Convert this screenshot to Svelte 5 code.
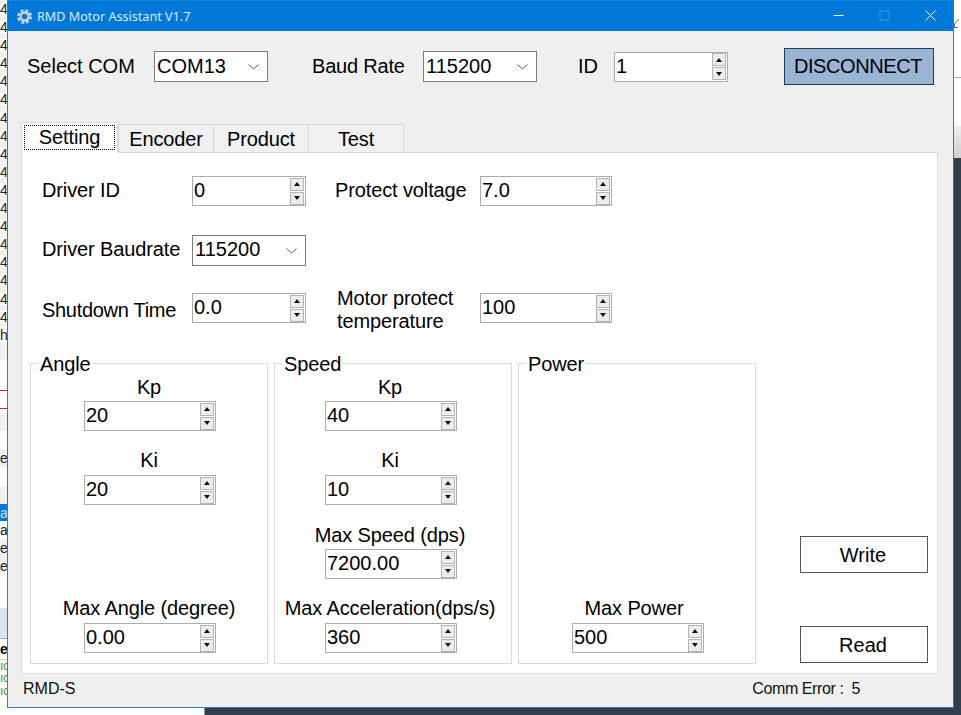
<script>
	const tabs = ['Setting', 'Encoder', 'Product', 'Test'];
	const stripRows = [
		...Array(18).fill({ h: 18.1, text: '4', kind: 'log' }),
		{ h: 17, text: 'h', kind: 'plain' },
		{ h: 17, text: '', kind: 'grey' },
		{ h: 18, text: '', kind: 'plain' },
		{ h: 18, text: '_', kind: 'rule' },
		{ h: 18, text: '_', kind: 'rule' },
		{ h: 17, text: '', kind: 'grey' },
		{ h: 18, text: '', kind: 'plain' },
		{ h: 18, text: 'e', kind: 'grey' },
		{ h: 19, text: '', kind: 'plain' },
		{ h: 18, text: '', kind: 'grey' },
		{ h: 17, text: 'a', kind: 'active' },
		{ h: 18, text: 'a', kind: 'plain' },
		{ h: 18, text: 'e', kind: 'grey' },
		{ h: 18, text: 'e', kind: 'grey' },
		{ h: 16, text: '', kind: 'plain' },
		{ h: 30, text: '', kind: 'toolbar' }
	];
</script>

{#snippet spin(value, cls = 'wide')}
	<div class="spin {cls}">
		<span class="value">{value}</span>
		<div class="arrows">
			<span class="arrow"><i class="up"></i></span>
			<span class="arrow"><i class="down"></i></span>
		</div>
	</div>
{/snippet}

{#snippet combo(value)}
	<div class="combo">
		<span class="value">{value}</span>
		<svg width="11" height="6" viewBox="0 0 11 6"><path d="M0.5 0.5 L5.5 5 L10.5 0.5" fill="none" stroke="#606060" /></svg>
	</div>
{/snippet}

{#snippet field(label, value, cls = '')}
	<div class="field {cls}">
		<span class="field-label">{label}</span>
		{@render spin(value, 'narrow')}
	</div>
{/snippet}

<div class="desktop">
	<div class="strip">
		{#each stripRows as row}
			<div class="strip-row {row.kind}" style="height: {row.h}px">{row.text}</div>
		{/each}
		<div class="strip-head">e</div>
		<div class="strip-green">ıc</div>
		<div class="strip-green">ıc</div>
		<div class="strip-green">ıc</div>
	</div>

	<div class="side">
		<svg class="side-icon" width="7" height="12" viewBox="0 0 7 12"><path d="M0 11.5 H4 M0.5 11 V8 L5 3" fill="none" stroke="#666" /></svg>
		<div class="side-line"></div>
		<div class="side-fade"></div>
	</div>

	<div class="window">
		<header class="titlebar">
			<svg class="gear" width="15" height="15" viewBox="0 0 15 15">
				<circle cx="7.5" cy="7.5" r="6.2" fill="none" stroke="#c9d6e2" stroke-width="2.4" stroke-dasharray="3 1.87" />
				<circle cx="7.5" cy="7.5" r="4" fill="none" stroke="#c9d6e2" stroke-width="2.4" />
			</svg>
			<span class="title">RMD Motor Assistant V1.7</span>
			<div class="controls">
				<svg width="11" height="11" viewBox="0 0 11 11"><path d="M0.5 5.5 H10.5" stroke="#fff" /></svg>
				<svg width="11" height="11" viewBox="0 0 11 11"><rect x="1" y="1" width="9" height="9" fill="none" stroke="#3d97e3" /></svg>
				<svg width="11" height="11" viewBox="0 0 11 11"><path d="M0.5 0.5 L10.5 10.5 M10.5 0.5 L0.5 10.5" stroke="#fff" /></svg>
			</div>
		</header>

		<div class="toolbar">
			<span class="tool-label com">Select COM</span>
			{@render combo('COM13')}
			<span class="tool-label baud">Baud Rate</span>
			{@render combo('115200')}
			<span class="tool-label id">ID</span>
			{@render spin('1')}
			<button class="disconnect">DISCONNECT</button>
		</div>

		<div class="tabs">
			{#each tabs as tab, i}
				<div class="tab" class:active={i === 0}>
					<span class="tab-text">{tab}</span>
				</div>
			{/each}
		</div>

		<div class="panel">
			<div class="row first">
				<span class="row-label">Driver ID</span>
				{@render spin('0')}
				<span class="row-label second">Protect voltage</span>
				{@render spin('7.0', 'narrow')}
			</div>
			<div class="row baudrate">
				<span class="row-label">Driver Baudrate</span>
				{@render combo('115200')}
			</div>
			<div class="row shutdown">
				<span class="row-label">Shutdown Time</span>
				{@render spin('0.0')}
				<span class="row-label second temp">Motor protect<br />temperature</span>
				{@render spin('100', 'narrow')}
			</div>

			<div class="lower">
				<section class="group angle">
					<span class="legend">Angle</span>
					{@render field('Kp', '20')}
					{@render field('Ki', '20', 'tall')}
					{@render field('Max Angle (degree)', '0.00', 'bottom')}
				</section>
				<section class="group speed">
					<span class="legend">Speed</span>
					{@render field('Kp', '40')}
					{@render field('Ki', '10', 'tall')}
					{@render field('Max Speed (dps)', '7200.00')}
					{@render field('Max Acceleration(dps/s)', '360', 'bottom')}
				</section>
				<section class="group power">
					<span class="legend">Power</span>
					{@render field('Max Power', '500', 'bottom')}
				</section>
				<div class="actions">
					<button class="action">Write</button>
					<button class="action">Read</button>
				</div>
			</div>
		</div>

		<footer class="status">
			<span>RMD-S</span>
			<span class="comm">Comm Error :<span class="count">5</span></span>
		</footer>
	</div>
</div>

<style>
	:global(body) {
		margin: 0;
	}

	.desktop {
		position: relative;
		width: 961px;
		height: 715px;
		overflow: hidden;
		background: #333f4a;
		font-family: 'Liberation Sans', Arial, sans-serif;
		color: #000;
	}

	/* the windows behind ours */
	.strip {
		position: absolute;
		top: 0;
		left: 0;
		width: 205px;
		height: 715px;
		overflow: hidden;
		background: #fff;
		font-size: 14px;
		border-right: 1px solid #8a8f94;
		box-sizing: border-box;
	}

	.strip-row {
		line-height: 18px;
		white-space: nowrap;
		color: #222;
	}

	.strip-row.log {
		background: linear-gradient(#f0f0f0 0 3px, #fff 3px 15px, #f0f0f0 15px);
	}

	.strip-row.grey {
		background: #f0f0f0;
	}

	.strip-row.rule {
		color: #a33;
		line-height: 10px;
	}

	.strip-row.active {
		background: #0078d7;
		color: #cfe6fa;
	}

	.strip-row.toolbar {
		background: #dfe3e8;
		border-bottom: 1px solid #aaa;
	}

	.strip-head {
		font-weight: 700;
		line-height: 20px;
		border-bottom: 1px solid #ccc;
	}

	.strip-green {
		color: #3c9a1e;
		line-height: 12.5px;
		font-size: 12px;
	}

	.side {
		position: absolute;
		top: 0;
		right: 0;
		width: 7px;
		height: 158px;
		background: #fff;
	}

	.side-icon {
		position: absolute;
		top: 16px;
		left: 0;
	}

	.side-line {
		position: absolute;
		top: 77px;
		left: 0;
		width: 7px;
		height: 1px;
		background: #aaa;
	}

	.side-fade {
		position: absolute;
		top: 126px;
		left: 0;
		width: 7px;
		height: 32px;
		background: linear-gradient(#eee, #d0d0d0);
	}

	.window {
		position: absolute;
		top: 0;
		left: 7px;
		width: 947px;
		height: 708px;
		box-sizing: border-box;
		display: flex;
		flex-direction: column;
		border: 1px solid #2b7cc4;
		border-top: 1px solid #1a86de;
		background: #efefef;
		font-size: 20px;
		letter-spacing: -0.12px;
	}

	.titlebar {
		display: flex;
		align-items: center;
		flex: none;
		height: 30px;
		background: #0078d7;
		color: #dcebf8;
		letter-spacing: 0;
	}

	.gear {
		margin-left: 9px;
	}

	.title {
		margin-left: 5px;
		font-family: 'Noto Sans', sans-serif;
		font-size: 12.6px;
	}

	.controls {
		display: flex;
		align-items: center;
		gap: 35px;
		margin-left: auto;
		margin-right: 17px;
		padding-bottom: 2px;
	}

	.toolbar {
		display: flex;
		align-items: center;
		flex: none;
		height: 37px;
		margin-top: 17px;
		padding-left: 19px;
	}

	.tool-label.com {
		width: 127px;
		letter-spacing: 0;
	}

	.tool-label.baud {
		width: 111px;
		margin-left: 44px;
		letter-spacing: -0.2px;
	}

	.tool-label.id {
		width: 36px;
		margin-left: 41px;
	}

	.disconnect {
		width: 150px;
		height: 37px;
		margin-left: 56px;
		border: 1px solid #1f3a5c;
		border-radius: 0;
		background: #9ab5d3;
		padding: 0 2px 0 0;
		font: inherit;
		letter-spacing: -0.4px;
		color: #000;
	}

	.combo,
	.spin {
		display: flex;
		align-items: center;
		box-sizing: border-box;
		flex: none;
		background: #fff;
		line-height: 1;
		letter-spacing: 0;
	}

	.combo {
		justify-content: space-between;
		width: 114px;
		height: 31px;
		padding: 0 8px 2px 2px;
		border: 1px solid #7a7a7a;
	}

	.combo svg {
		margin-top: 3px;
	}

	.spin {
		justify-content: space-between;
		height: 30px;
		padding-left: 1px;
		border: 1px solid #ababab;
	}

	.spin .value {
		margin-bottom: 2px;
	}

	.spin.wide {
		width: 114px;
	}

	.spin.narrow {
		width: 132px;
	}

	.arrows {
		display: flex;
		flex-direction: column;
		gap: 1px;
		margin-right: 1px;
	}

	.arrow {
		display: flex;
		align-items: center;
		justify-content: center;
		box-sizing: border-box;
		width: 14px;
		height: 13px;
		border: 1px solid #b4b4b4;
		background: #ececec;
	}

	.arrow i {
		width: 0;
		height: 0;
		border-left: 3.5px solid transparent;
		border-right: 3.5px solid transparent;
	}

	.arrow i.up {
		border-bottom: 4px solid #111;
	}

	.arrow i.down {
		border-top: 4px solid #111;
	}

	.tabs {
		display: flex;
		align-items: flex-end;
		flex: none;
		height: 31px;
		margin-top: 37px;
		margin-bottom: -1px;
		padding-left: 14px;
		position: relative;
		z-index: 1;
	}

	.tab {
		display: flex;
		align-items: center;
		justify-content: center;
		box-sizing: border-box;
		width: 96px;
		height: 29px;
		margin-right: -1px;
		padding-top: 2px;
		border: 1px solid #d9d9d9;
		background: #f0f0f0;
	}

	.tab:last-child {
		margin-right: 0;
	}

	.tab.active {
		width: 97px;
		height: 31px;
		margin-right: 0;
		margin-left: -1px;
		padding: 2px;
		background: #fff;
		border-bottom-color: #fff;
	}

	.tab.active .tab-text {
		display: flex;
		align-items: center;
		justify-content: center;
		box-sizing: border-box;
		width: 100%;
		height: 100%;
		border: 1px dotted #000;
	}

	.panel {
		box-sizing: border-box;
		flex: none;
		width: 917px;
		height: 522px;
		margin-left: 13px;
		padding: 23px 0 9px 8px;
		border: 1px solid #d9d9d9;
		background: #fff;
		display: flex;
		flex-direction: column;
	}

	.row {
		display: flex;
		align-items: center;
		margin-left: 12px;
		flex: none;
		height: 30px;
	}

	.row.baudrate {
		margin-top: 29px;
	}

	.row.shutdown {
		margin-top: 28px;
	}

	.row-label {
		box-sizing: border-box;
		width: 150px;
		flex: none;
		padding-bottom: 2px;
	}

	.row-label.second {
		width: 145px;
		margin-left: 29px;
	}

	.row.shutdown .row-label {
		padding: 4px 0 0;
		letter-spacing: -0.3px;
	}

	.row.shutdown .row-label.temp {
		width: 143px;
		margin-left: 31px;
		line-height: 23px;
		letter-spacing: -0.12px;
	}

	.lower {
		display: flex;
		flex: 1;
		gap: 6px;
		margin-top: 40px;
	}

	.group {
		position: relative;
		display: flex;
		flex-direction: column;
		align-items: center;
		box-sizing: border-box;
		width: 238px;
		padding: 12px 0 10px;
		border: 1px solid #d9d9d9;
	}

	.group.angle,
	.group.power {
		padding-left: 2px;
	}

	.group.speed {
		padding-right: 4px;
	}

	.group.angle .field-label,
	.group.speed .field-label {
		margin-right: 2px;
	}

	.group.power .field-label {
		margin-right: 8px;
	}

	.legend {
		position: absolute;
		top: -11px;
		left: 7px;
		padding: 0 2px;
		background: #fff;
		line-height: 23px;
	}

	.field {
		display: flex;
		flex-direction: column;
		align-items: center;
		margin-top: 19px;
	}

	.field:nth-child(2) {
		margin-top: 0;
	}

	.field.tall {
		margin-top: 18px;
	}

	.field.bottom {
		margin-top: auto;
	}

	.field-label {
		height: 25px;
		line-height: 23px;
		white-space: nowrap;
	}

	.field.bottom .field-label,
	.field.tall .field-label {
		height: 26px;
	}

	.actions {
		display: flex;
		flex-direction: column;
		justify-content: flex-end;
		gap: 53px;
		margin-left: 38px;
		padding-bottom: 1px;
	}

	.action {
		box-sizing: border-box;
		width: 128px;
		height: 37px;
		border: 1px solid #555;
		border-radius: 0;
		background: #fff;
		padding: 2px 2px 0 0;
		font: inherit;
		color: #000;
	}

	.status {
		display: flex;
		align-items: center;
		justify-content: space-between;
		flex: 1;
		padding: 0 93px 3px 15px;
		font-size: 16px;
		color: #111;
		letter-spacing: 0;
	}

	.comm {
		letter-spacing: -0.4px;
	}

	.count {
		margin-left: 8px;
	}
</style>
